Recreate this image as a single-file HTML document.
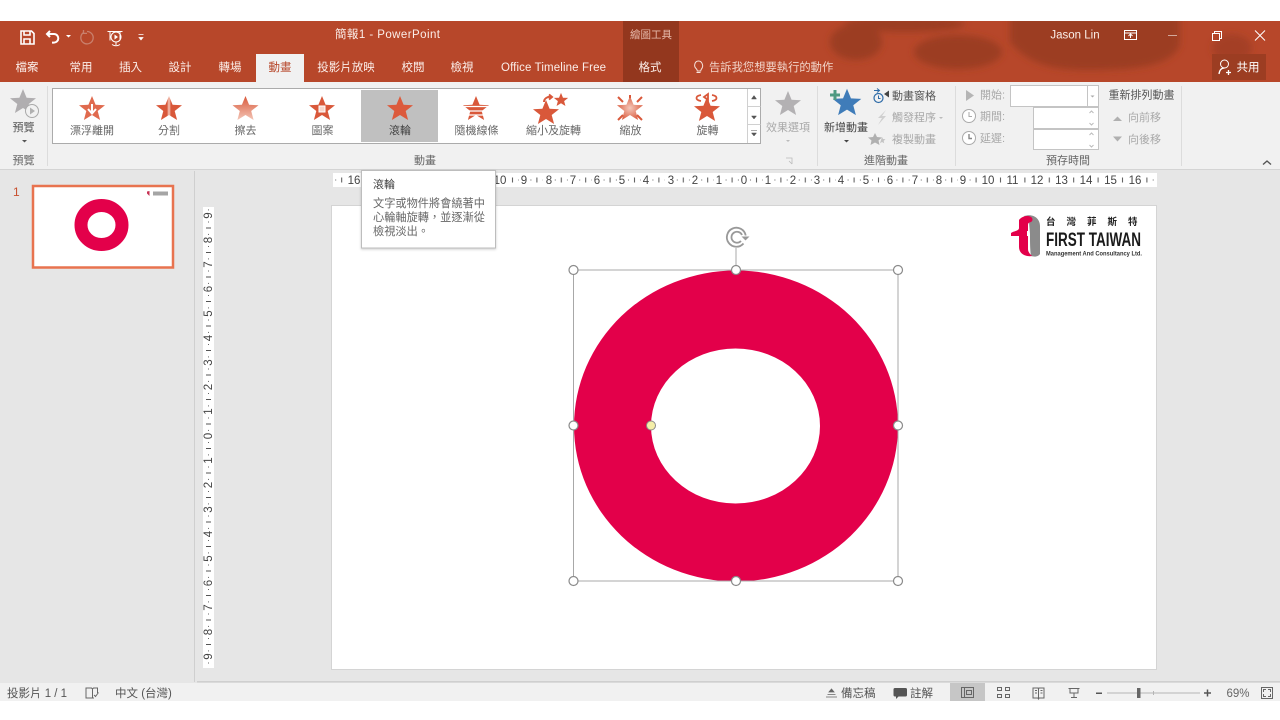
<!DOCTYPE html>
<html><head><meta charset="utf-8"><title>PowerPoint</title>
<style>
html,body{margin:0;padding:0;background:#fff;width:1280px;height:720px;overflow:hidden}
svg{display:block;filter:blur(.3px)}
text{font-family:"Liberation Sans","Noto Sans CJK TC",sans-serif;font-size:11px;fill:#555}
.tab{font-size:11.5px;fill:#fbeee9;text-anchor:middle}
.g{text-anchor:middle;fill:#666}
.d{fill:#a9a9a9}
.r{font-size:11.5px;fill:#444;text-anchor:middle}
.rv{font-size:11.5px;fill:#444;text-anchor:middle}
</style></head><body>
<svg width="1280" height="720" viewBox="0 0 1280 720" xmlns="http://www.w3.org/2000/svg">
<defs>
<path id="s" d="M0-13 3.6-4.2 13-3.8 5.7 2 8.1 11 0 6 -8.1 11 -5.700 2 -13-3.800-3.600-4.200Z"/>
<linearGradient id="wipe" x1="0" y1="0" x2="0" y2="1"><stop offset="0" stop-color="#d9583a"/><stop offset="1" stop-color="#f3c5b6"/></linearGradient>
<linearGradient id="split" x1="0" y1="0" x2="1" y2="0"><stop offset="0" stop-color="#d9583a"/><stop offset=".42" stop-color="#d9583a"/><stop offset=".5" stop-color="#f4c8ba"/><stop offset=".58" stop-color="#d9583a"/><stop offset="1" stop-color="#d9583a"/></linearGradient>
<radialGradient id="zoom"><stop offset="0" stop-color="#f4c8ba"/><stop offset="1" stop-color="#dc6347"/></radialGradient>
<filter id="b" x="-10%" y="-30%" width="120%" height="160%"><feGaussianBlur stdDeviation="3.500"/></filter>
<filter id="sh" x="-5%" y="-5%" width="110%" height="115%"><feDropShadow dx="0" dy="1" stdDeviation="1.200" flood-color="#000" flood-opacity=".2"/></filter>
<pattern id="hr" x="744" y="173" width="24.400" height="14" patternUnits="userSpaceOnUse"><rect x="6" y="6.500" width="1" height="1" fill="#666"/><rect x="12" y="4.500" width="1" height="5" fill="#555"/><rect x="18.300" y="6.500" width="1" height="1" fill="#666"/></pattern>
<pattern id="vr" x="203" y="436" width="11" height="24.500" patternUnits="userSpaceOnUse"><rect x="5" y="6" width="1" height="1" fill="#666"/><rect x="3" y="12" width="5" height="1" fill="#555"/><rect x="5" y="18.400" width="1" height="1" fill="#666"/></pattern>
<clipPath id="tb"><rect x="679" y="21" width="601" height="61"/></clipPath>
</defs>

<rect width="1280" height="720" fill="#fff"/>
<!-- title bar -->
<rect y="21" width="1280" height="61" fill="#b7472a"/>
<g clip-path="url(#tb)">
<g filter="url(#b)" fill="#9c3d22">
<ellipse cx="856" cy="42" rx="26" ry="18"/><ellipse cx="958" cy="52" rx="44" ry="17"/><path d="M1010 15h170v30c-10 25-60 25-95 25-40 0-60-10-75-28Z"/><ellipse cx="905" cy="24" rx="60" ry="8"/><ellipse cx="1232" cy="48" rx="20" ry="14" opacity=".7"/>
</g>
</g>
<rect x="623" y="21" width="56" height="61" fill="#93371e"/>
<rect x="1212" y="54" width="54" height="26" fill="#9c3d22"/>

<!-- QAT -->
<g fill="none" stroke="#fff" stroke-width="1.600">
<path d="M21 31h10.500l2.500 2.500V44H21Z"/><path d="M24 31v4h6v-4M24 44v-5h6v5"/>
<path d="M50 31l-3 3 3 3M47 34h7a4.200 4.200 0 0 1 0 8.600h-2" stroke-width="2"/>
<path d="M87 31.500a6.200 6.200 0 1 1-3.800 1.300M83.500 30v3.400H87" stroke="#c9806d" stroke-width="1.300"/>
<path d="M107.500 31.500h15M110 31.500v9M120 31.500v9" stroke-width="1"/>
<circle cx="116" cy="37" r="5" stroke-width="1"/>
<path d="M112 44.500a7 7 0 0 0 8 0M116 42v3" stroke-width="1"/>
</g>
<path d="M66 35h5l-2.500 2.500ZM114.500 34.500v5l3.500-2.500Z" fill="#fff"/>
<path d="M138.500 34.500h5M139 37.500h4l-2 2.500Z" fill="#fff" stroke="#fff" stroke-width=".7"/>

<text x="335" y="38" textLength="105" style="font-size:11.500px;fill:#fbeee9">簡報1 - PowerPoint</text>
<text x="651" y="38" class="tab" style="font-size:10.500px;fill:#e6b9aa">繪圖工具</text>
<text x="1075" y="38.500" class="tab" style="font-size:11.500px">Jason Lin</text>

<!-- window controls -->
<g fill="none" stroke="#fff" stroke-width="1">
<path d="M1124.500 30.500h12v9h-12ZM1124.500 33h12M1130.500 38v-4M1128.500 36l2-2 2 2"/>
<path d="M1168 35.500h9" opacity=".55"/>
<path d="M1212.500 33.500h7v7h-7ZM1214.500 33.500v-2h7v7h-2"/>
<path d="M1255 30.500l10 10M1265 30.500l-10 10"/>
<circle cx="1224.500" cy="64" r="4"/><path d="M1219 74c.5-4 2.500-6 5.500-6M1226 72.500h5M1228.500 70v5" stroke-width="1.300"/>
</g>
<text x="1248" y="71" class="tab" style="fill:#fff">共用</text>

<!-- tabs -->
<rect x="256" y="54" width="48" height="28" fill="#f1f1f1"/>
<text x="27" y="71" class="tab">檔案</text>
<text x="81" y="71" class="tab">常用</text>
<text x="130.500" y="71" class="tab">插入</text>
<text x="180" y="71" class="tab">設計</text>
<text x="230" y="71" class="tab">轉場</text>
<text x="280" y="71" class="tab" style="fill:#b7472a">動畫</text>
<text x="346" y="71" class="tab">投影片放映</text>
<text x="413" y="71" class="tab">校閱</text>
<text x="462" y="71" class="tab">檢視</text>
<text x="501" y="71" textLength="105" style="font-size:11.500px;fill:#fbeee9">Office Timeline Free</text>
<text x="650" y="71" class="tab">格式</text>
<text x="709" y="71" style="font-size:11.300px;fill:#f2d5ca">告訴我您想要執行的動作</text>
<path d="M696.500 72.500h4M696.500 69c-3.500-3-1.500-8 2-8s5.500 5 3 8c-.5.600-.7 1-.8 2h-3.400c-.1-1-.3-1.400-.8-2Z" fill="none" stroke="#f6e3dc" stroke-width="1"/>

<!-- ribbon -->
<rect y="82" width="1280" height="88" fill="#f1f1f1"/>
<rect y="169" width="1280" height="1" fill="#d4d4d4"/>
<g fill="#dcdcdc"><rect x="47" y="86" width="1" height="80"/><rect x="817" y="86" width="1" height="80"/><rect x="955" y="86" width="1" height="80"/><rect x="1181" y="86" width="1" height="80"/></g>

<!-- preview -->
<use href="#s" x="23" y="102" fill="#b0aeb0"/>
<circle cx="32" cy="111" r="6.500" fill="#f1f1f1" stroke="#a9a9a9"/><path d="M30 107.500v7l5-3.500Z" fill="#b0b0b0"/>
<text x="23.500" y="131" class="g" style="fill:#555">預覽</text>
<path d="M22 140h5l-2.500 2.500Z" fill="#555"/>
<text x="23.500" y="164" class="g">預覽</text>

<!-- gallery -->
<rect x="52.500" y="88.500" width="708" height="55" fill="#fff" stroke="#ababab"/>
<rect x="361" y="90" width="77" height="52" fill="#c0c0c0"/>
<path d="M747.500 89v54M747.500 106.500h13M747.500 124.500h13" stroke="#d0d0d0" fill="none"/>
<path d="M751.500 99h5L754 95.500ZM751.500 116h5L754 119ZM751.500 133h5L754 136ZM751 130.500h6" fill="#555" stroke="#555" stroke-width=".5"/>

<use href="#s" x="92" y="109" fill="#e06a4e"/>
<path d="M92 104v8M88 109l4 4.500 4-4.500" stroke="#fff" stroke-width="2" fill="none"/>
<use href="#s" x="169" y="109" fill="url(#split)"/>
<use href="#s" x="245.500" y="109" fill="url(#wipe)"/>
<use href="#s" x="322" y="109" fill="#d9583a"/>
<rect x="319" y="106" width="6" height="6" fill="#f8d7cc" stroke="#fff"/>
<use href="#s" x="400" y="109" fill="#dc5a3c"/>
<use href="#s" x="476" y="109" fill="#d9583a"/>
<path d="M461 106.500h30M464 111h24M467 115h18" stroke="#fff" stroke-width="1.300"/>
<use href="#s" x="546" y="113" fill="#d9583a"/>
<path d="M0-13 3.600-4.200 13-3.800 5.700 2 8.100 11 0 6-8.100 11-5.700 2-13-3.800-3.600-4.200Z" transform="translate(561 100) scale(.55)" fill="#d9583a"/>
<path d="M544 102c0-3 3-6 8-5M549 94.500l3 2.500-3 2.500" stroke="#d9583a" stroke-width="2" fill="none"/>
<use href="#s" x="630" y="109" fill="url(#zoom)"/>
<path d="M618 97l5 5M642 97l-5 5M618 120l5-5M642 120l-5-5M630 95v3" stroke="#d9583a" stroke-width="2"/>
<use href="#s" x="707" y="110" fill="#d9583a"/>
<path d="M701 95c-6 1-6 5 0 6M712 95c6 1 6 5 0 6M704 97l4-3v6Z" stroke="#d9583a" stroke-width="1.800" fill="none"/>

<text x="92" y="134" class="g">漂浮離開</text>
<text x="169" y="134" class="g">分割</text>
<text x="245.500" y="134" class="g">擦去</text>
<text x="322.500" y="134" class="g">圖案</text>
<text x="400" y="134" class="g" style="fill:#444">滾輪</text>
<text x="476.500" y="134" class="g">隨機線條</text>
<text x="553.500" y="134" class="g">縮小及旋轉</text>
<text x="630.500" y="134" class="g">縮放</text>
<text x="707.500" y="134" class="g">旋轉</text>

<use href="#s" x="788" y="104" fill="#b3b1b3"/>
<text x="788" y="131" class="g d">效果選項</text>
<path d="M786 140h4l-2 2Z" fill="#bbb"/>
<text x="425" y="164" class="g">動畫</text>
<path d="M786 158h6v6M789 161l3 3" fill="none" stroke="#bbb" stroke-width=".8"/>

<!-- advanced -->
<use href="#s" x="847" y="103" fill="#3f7cb9" transform="translate(847 103) scale(1.100) translate(-847 -103)"/>
<path d="M830 95h10M835 90v10" stroke="#4f9a82" stroke-width="3"/>
<text x="846" y="131" class="g" style="fill:#444">新增動畫</text>
<path d="M844 140h5l-2.500 2.500Z" fill="#444"/>
<circle cx="878.500" cy="98" r="4.500" fill="none" stroke="#2f6ca8" stroke-width="1.200"/>
<path d="M874 90.500h5M877 88.500l2.500 2-2.500 2M878.500 95.500v3h2" stroke="#2f6ca8" fill="none"/>
<path d="M889 90.500v7l-5-3.500Z" fill="#444"/>
<text x="892" y="99.500" style="fill:#555">動畫窗格</text>
<path d="M886 110l-8 8h4l-4 7 8-9h-4l4-6Z" fill="#cfcfcf"/>
<text x="892" y="121" class="d">觸發程序</text>
<path d="M939 117h4l-2 2Z" fill="#bbb"/>
<path d="M875 133l2 4 5 .5-3.500 3 1 4.500-4.500-2.500-4.500 2.500 1-4.500-3.500-3 5-.5Z" fill="#b0b0b0"/>
<path d="M882 137l1 2 2.500.3-1.800 1.600.5 2.300-2.200-1.200-2 1.200" fill="#c4c4c4"/>
<text x="892" y="143" class="d">複製動畫</text>
<text x="886" y="164" class="g">進階動畫</text>

<!-- timing -->
<path d="M966 90v11l8-5.500Z" fill="#b5b5b5"/>
<text x="980" y="98.500" class="d">開始:</text>
<rect x="1010.500" y="85.500" width="88" height="21" fill="#fff" stroke="#c4c4c4"/>
<path d="M1087.500 86v20" stroke="#c4c4c4"/><path d="M1090.500 95.500h4l-2 2Z" fill="#aaa"/>
<circle cx="969" cy="116" r="6.500" fill="#fff" stroke="#aaa"/><path d="M969 112v4.500h3" stroke="#aaa" fill="none"/>
<text x="980" y="120" class="d">期間:</text>
<rect x="1033.500" y="107.500" width="65" height="21" fill="#fff" stroke="#c4c4c4"/>
<path d="M1089.500 113l2-2 2 2M1089.500 123l2 2 2-2" fill="none" stroke="#bbb"/>
<circle cx="969" cy="138" r="6.500" fill="#fff" stroke="#aaa"/><path d="M969 134v4.500h3" stroke="#888" stroke-width="1.400" fill="none"/>
<text x="980" y="142" class="d">延遲:</text>
<rect x="1033.500" y="129.500" width="65" height="20" fill="#fff" stroke="#c4c4c4"/>
<path d="M1089.500 135l2-2 2 2M1089.500 145l2 2 2-2" fill="none" stroke="#bbb"/>
<text x="1068" y="164" class="g">預存時間</text>

<text x="1141.500" y="98.500" class="g" style="fill:#555">重新排列動畫</text>
<path d="M1113 121h9l-4.500-4.500Z" fill="#b0b0b0"/><text x="1128" y="121" class="d">向前移</text>
<path d="M1113 136.500h9l-4.500 5Z" fill="#b0b0b0"/><text x="1128" y="143" class="d">向後移</text>
<path d="M1263 164.500l4-3.500 4 3.500" fill="none" stroke="#555" stroke-width="1.400"/>

<!-- workspace -->
<rect y="170" width="1280" height="513" fill="#e6e6e6"/>
<rect x="194" y="171" width="1" height="511" fill="#cfcfcf"/>
<rect x="197" y="681" width="1083" height="1.500" fill="#cfcfcf"/>

<!-- thumb -->
<text x="13" y="196" style="font-size:12px;fill:#c8502f">1</text>
<rect x="33" y="186" width="140" height="81.500" fill="#fff" stroke="#e8734f" stroke-width="2.500"/>
<ellipse cx="101.500" cy="225" rx="20.500" ry="19.500" fill="none" stroke="#e3004a" stroke-width="13"/>
<path d="M147 191.500l2.500-.5v5l-1-1-1.500-1.500Z" fill="#c63152"/><rect x="153" y="191.500" width="15" height="4" fill="#a5a5a5"/>

<!-- h ruler -->
<rect x="333" y="173" width="824" height="14" fill="#fff"/>
<rect x="333" y="173" width="824" height="14" fill="url(#hr)"/>
<g fill="#fff">
<rect x="347" y="174" width="14" height="12"/><rect x="495" y="174" width="13" height="12"/><rect x="519" y="174" width="10" height="12"/><rect x="543" y="174" width="10" height="12"/><rect x="568" y="174" width="10" height="12"/><rect x="592" y="174" width="10" height="12"/><rect x="617" y="174" width="10" height="12"/><rect x="641" y="174" width="10" height="12"/><rect x="665" y="174" width="10" height="12"/><rect x="690" y="174" width="10" height="12"/><rect x="714" y="174" width="10" height="12"/><rect x="739" y="174" width="10" height="12"/><rect x="763" y="174" width="10" height="12"/><rect x="788" y="174" width="10" height="12"/><rect x="812" y="174" width="10" height="12"/><rect x="836" y="174" width="10" height="12"/><rect x="861" y="174" width="10" height="12"/><rect x="885" y="174" width="10" height="12"/><rect x="910" y="174" width="10" height="12"/><rect x="934" y="174" width="10" height="12"/><rect x="958" y="174" width="10" height="12"/><rect x="981" y="174" width="15" height="12"/><rect x="1005" y="174" width="15" height="12"/><rect x="1030" y="174" width="15" height="12"/><rect x="1054" y="174" width="15" height="12"/><rect x="1079" y="174" width="15" height="12"/><rect x="1103" y="174" width="15" height="12"/><rect x="1128" y="174" width="15" height="12"/>
</g>
<text x="354" y="184" class="r">16</text>
<text x="500" y="184" class="r">10</text><text x="524" y="184" class="r">9</text><text x="549" y="184" class="r">8</text><text x="573" y="184" class="r">7</text><text x="597" y="184" class="r">6</text><text x="622" y="184" class="r">5</text><text x="646" y="184" class="r">4</text><text x="671" y="184" class="r">3</text><text x="695" y="184" class="r">2</text><text x="719" y="184" class="r">1</text><text x="744" y="184" class="r">0</text><text x="768" y="184" class="r">1</text><text x="793" y="184" class="r">2</text><text x="817" y="184" class="r">3</text><text x="841" y="184" class="r">4</text><text x="866" y="184" class="r">5</text><text x="890" y="184" class="r">6</text><text x="915" y="184" class="r">7</text><text x="939" y="184" class="r">8</text><text x="963" y="184" class="r">9</text><text x="988" y="184" class="r">10</text><text x="1012.500" y="184" class="r">11</text><text x="1037" y="184" class="r">12</text><text x="1061.500" y="184" class="r">13</text><text x="1086" y="184" class="r">14</text><text x="1110.500" y="184" class="r">15</text><text x="1135" y="184" class="r">16</text>

<!-- v ruler -->
<rect x="203" y="207" width="11" height="461" fill="#fff"/>
<rect x="203" y="207" width="11" height="461" fill="url(#vr)"/>
<g fill="#fff">
<rect x="204" y="211" width="9" height="9"/><rect x="204" y="236" width="9" height="9"/><rect x="204" y="260" width="9" height="9"/><rect x="204" y="285" width="9" height="9"/><rect x="204" y="309" width="9" height="9"/><rect x="204" y="334" width="9" height="9"/><rect x="204" y="358" width="9" height="9"/><rect x="204" y="383" width="9" height="9"/><rect x="204" y="407" width="9" height="9"/><rect x="204" y="432" width="9" height="9"/><rect x="204" y="456" width="9" height="9"/><rect x="204" y="481" width="9" height="9"/><rect x="204" y="505" width="9" height="9"/><rect x="204" y="530" width="9" height="9"/><rect x="204" y="554" width="9" height="9"/><rect x="204" y="579" width="9" height="9"/><rect x="204" y="603" width="9" height="9"/><rect x="204" y="628" width="9" height="9"/><rect x="204" y="652" width="9" height="9"/>
</g>
<g>
<text transform="translate(212 215.500) rotate(-90)" class="rv">9</text><text transform="translate(212 240) rotate(-90)" class="rv">8</text><text transform="translate(212 264.500) rotate(-90)" class="rv">7</text><text transform="translate(212 289) rotate(-90)" class="rv">6</text><text transform="translate(212 313.500) rotate(-90)" class="rv">5</text><text transform="translate(212 338) rotate(-90)" class="rv">4</text><text transform="translate(212 362.500) rotate(-90)" class="rv">3</text><text transform="translate(212 387) rotate(-90)" class="rv">2</text><text transform="translate(212 411.500) rotate(-90)" class="rv">1</text><text transform="translate(212 436) rotate(-90)" class="rv">0</text><text transform="translate(212 460.500) rotate(-90)" class="rv">1</text><text transform="translate(212 485) rotate(-90)" class="rv">2</text><text transform="translate(212 509.500) rotate(-90)" class="rv">3</text><text transform="translate(212 534) rotate(-90)" class="rv">4</text><text transform="translate(212 558.500) rotate(-90)" class="rv">5</text><text transform="translate(212 583) rotate(-90)" class="rv">6</text><text transform="translate(212 607.500) rotate(-90)" class="rv">7</text><text transform="translate(212 632) rotate(-90)" class="rv">8</text><text transform="translate(212 656.500) rotate(-90)" class="rv">9</text>
</g>

<!-- slide -->
<rect x="331.500" y="205.500" width="825" height="464" fill="#fff" stroke="#d4d4d4" stroke-width="1"/>

<!-- logo -->
<path d="M1024 216c10-3 16 3 16 10v28c-2 3-6 3-9 2-1-6-1-14-1-22l-1-12c-1-3-3-4-5-6Z" fill="#8b8b8b"/>
<path d="M1019 220c3-4 9-5 12-3 2 1 2 4 0 5-2 .500-3 1-3 3v6h-1v5h1v13c0 3 2 5 4 7-6 1-13-2-13-9v-11h-8v-3c3-2 8-2 8-5Z" fill="#e3004a"/>
<text x="1046" y="225" style="font-size:9.500px;font-weight:700;fill:#222;letter-spacing:11px">台灣菲斯特</text>
<text x="1046" y="246" textLength="95" lengthAdjust="spacingAndGlyphs" style="font-size:19px;font-weight:700;fill:#1a1a1a">FIRST TAIWAN</text>
<text x="1046" y="255.500" textLength="96" lengthAdjust="spacingAndGlyphs" style="font-size:6.500px;font-weight:700;fill:#333">Management And Consultancy Ltd.</text>

<!-- donut -->
<path fill-rule="evenodd" fill="#e3004a" d="M574 426a162 155.500 0 1 0 324 0a162 155.500 0 1 0-324 0ZM651 426a84.500 77.500 0 1 1 169 0a84.500 77.500 0 1 1-169 0Z"/>
<rect x="573.500" y="270" width="324.500" height="311" fill="none" stroke="#a8a8a8" stroke-width="1"/>
<path d="M736 270v-22" stroke="#a8a8a8"/>
<g fill="#fff" stroke="#8a8a8a" stroke-width="1.200">
<circle cx="573.500" cy="270" r="4.500"/><circle cx="736" cy="270" r="4.500"/><circle cx="898" cy="270" r="4.500"/>
<circle cx="573.500" cy="425.500" r="4.500"/><circle cx="898" cy="425.500" r="4.500"/>
<circle cx="573.500" cy="581" r="4.500"/><circle cx="736" cy="581" r="4.500"/><circle cx="898" cy="581" r="4.500"/>
</g>
<circle cx="651" cy="425.500" r="4.500" fill="#f4eea8" stroke="#8a8a8a"/>
<g fill="none" stroke="#999" stroke-width="1.800" transform="translate(1 0)">
<path d="M742.500 243.500a9.500 9.500 0 1 1 2.200-8"/><path d="M740 241a5.500 5.500 0 1 1 1-6"/>
<path d="M740.500 236.500h8l-4 4Z" fill="#999" stroke="none"/>
</g>

<!-- tooltip -->
<rect x="361.500" y="170.500" width="134" height="77.500" fill="#fff" stroke="#bdbdbd" filter="url(#sh)"/>
<text x="373" y="188" style="fill:#444">滾輪</text>
<text x="373" y="207" style="fill:#666;font-size:11.200px">文字或物件將會繞著中</text>
<text x="373" y="221" style="fill:#666;font-size:11.200px">心輪軸旋轉，並逐漸從</text>
<text x="373" y="235" style="fill:#666;font-size:11.200px">檢視淡出。</text>

<!-- status bar -->
<rect y="683" width="1280" height="18" fill="#f1f1f1"/>
<rect x="950" y="683" width="35" height="18" fill="#c6c6c6"/>
<text x="7" y="697" style="fill:#555;font-size:11.500px">投影片 1 / 1</text>
<path d="M86 688h5.500l1 1v9h-6.500ZM92.500 689l1-1h4v5M92.500 698h1.500M94 695l1.500 1.500 3-4" fill="none" stroke="#666"/>
<text x="115" y="697" style="fill:#555;font-size:11.500px">中文 (台灣)</text>
<path d="M826 697h11M827.500 694.500h8M829 692h5l-2.500-3Z" fill="#666" stroke="#666" stroke-width=".8"/>
<text x="841" y="697" style="fill:#555;font-size:11.500px">備忘稿</text>
<path d="M895 688h10.500q1.500 0 1.500 1.500v5.500q0 1.500-1.500 1.500h-7l-2.500 2.500v-2.500h-1q-1.500 0-1.500-1.500v-5.500q0-1.500 1.500-1.500Z" fill="#555"/>
<text x="910" y="697" style="fill:#555;font-size:11.500px">註解</text>
<g fill="none" stroke="#666">
<path d="M961.500 687.500h12v10h-12ZM964.500 687.500v10M966.500 690.500h5v4h-5Z"/>
<path d="M997.500 687.500h4v3h-4ZM1005.500 687.500h4v3h-4ZM997.500 694.500h4v3h-4ZM1005.500 694.500h4v3h-4Z"/>
<path d="M1033 688h5l.5 1 .5-1h5v10h-5l-.5 1-.5-1h-5ZM1038.500 689v9M1035 690.500h2M1035 693h2M1040.500 690.500h2M1040.500 693h2"/>
<path d="M1068.500 688.500h11M1070 688.500v4.500h8v-4.500M1074 693v4M1071 697.500h6"/>
<path d="M1261.500 687.500h11v11h-11ZM1263.500 692v-2.500h2.500M1270.500 692v-2.500H1268M1263.500 694v2.500h2.500M1270.500 694v2.500H1268"/>
</g>
<rect x="1096" y="692.500" width="6" height="1.500" fill="#555"/>
<rect x="1107" y="692.500" width="93" height="1" fill="#b5b5b5"/>
<rect x="1153" y="691" width="1" height="4" fill="#b5b5b5"/>
<rect x="1137" y="688" width="3.500" height="10" fill="#666"/>
<path d="M1204 693h7M1207.500 689.500v7" stroke="#555" stroke-width="1.500"/>
<text x="1226.500" y="697" style="fill:#666;font-size:11.500px">69%</text>
</svg>
</body></html>
